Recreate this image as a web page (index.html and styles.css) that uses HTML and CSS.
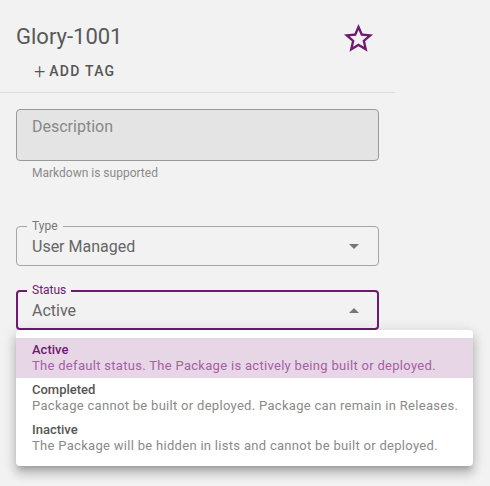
FILE: index.html
```html
<!DOCTYPE html>
<html>
<head>
<meta charset="utf-8">
<link rel="stylesheet" href="styles.css">
</head>
<body>
<div class="panel">
  <header class="head">
    <div class="title-row">
      <h1 class="title">Glory-1001</h1>
      <button class="fav" aria-label="Favorite">
        <svg width="35" height="35" viewBox="0 0 24 24"><path fill="#6e1a6e" d="M22 9.24l-7.19-.62L12 2 9.19 8.63 2 9.24l5.46 4.73L5.82 21 12 17.27 18.18 21l-1.63-7.03L22 9.24zM12 15.4l-3.76 2.27 1-4.28-3.32-2.88 4.38-.38L12 6.1l1.71 4.04 4.38.38-3.32 2.88 1 4.28L12 15.4z"/></svg>
      </button>
    </div>
    <button class="add-tag"><span class="plus">+</span>ADD TAG</button>
  </header>

  <div class="form">
    <div class="field">
      <div class="desc-box">Description</div>
      <div class="helper">Markdown is supported</div>
    </div>

    <div class="select">
      <span class="legend">Type</span>
      <span class="value">User Managed</span>
      <span class="arrow down"></span>
    </div>

    <div class="select focused">
      <span class="legend">Status</span>
      <span class="value">Active</span>
      <span class="arrow up"></span>
    </div>
  </div>

  <ul class="menu">
    <li class="item selected">
      <div class="item-title">Active</div>
      <div class="item-desc">The default status. The Package is actively being built or deployed.</div>
    </li>
    <li class="item">
      <div class="item-title">Completed</div>
      <div class="item-desc">Package cannot be built or deployed. Package can remain in Releases.</div>
    </li>
    <li class="item">
      <div class="item-title">Inactive</div>
      <div class="item-desc">The Package will be hidden in lists and cannot be built or deployed.</div>
    </li>
  </ul>
</div>
</body>
</html>
```
FILE: styles.css
```css
* { box-sizing: border-box; }
html, body {
  margin: 0;
  background: #f2f2f2;
  font-family: Roboto, "Liberation Sans", sans-serif;
}
.panel {
  width: 490px;
  height: 486px;
  position: relative;
}
.head {
  width: 395px;
  border-bottom: 1px solid #dcdcdc;
  padding: 22px 0 11px 16px;
}
.title-row {
  display: flex;
  align-items: center;
  justify-content: space-between;
  height: 30px;
}
.title {
  margin: 0;
  font-size: 22px;
  font-weight: 400;
  color: #585858;
  line-height: 30px;
}
.fav {
  border: 0;
  background: none;
  padding: 0;
  margin-right: 19px;
  display: flex;
  margin-top: 3px;
}
.add-tag {
  margin: 9px 0 0 18px;
  border: 0;
  background: none;
  padding: 0;
  font-family: inherit;
  font-size: 14px;
  font-weight: 500;
  letter-spacing: 1.25px;
  color: #555;
  display: flex;
  align-items: center;
  height: 20px;
}
.plus {
  font-size: 20px;
  font-weight: 300;
  margin-right: 4px;
  letter-spacing: 0;
  line-height: 20px;
}
.form {
  padding: 16px 0 0 16px;
  width: 379px;
}
.desc-box {
  height: 52px;
  border: 1px solid #9a9a9a;
  border-radius: 4px;
  background: #e4e4e4;
  padding: 7px 15px;
  font-size: 16px;
  color: #888;
  line-height: 20px;
}
.helper {
  font-size: 12px;
  color: #8a8a8a;
  padding: 4px 16px 0;
  line-height: 16px;
}
.select {
  position: relative;
  margin-top: 45px;
  height: 40px;
  border: 1px solid #a5a5a5;
  border-radius: 4px;
  display: flex;
  align-items: center;
  padding: 0 15px;
}
.select + .select { margin-top: 24px; }
.select.focused {
  border: 2px solid #6e1a6e;
  padding: 0 14px;
}
.legend {
  position: absolute;
  top: -8px;
  left: 10px;
  padding: 0 5px;
  background: #f2f2f2;
  font-size: 12px;
  line-height: 14px;
  color: #777;
}
.focused .legend { color: #6e1a6e; left: 9px; top: -9px; }
.value {
  font-size: 16px;
  color: #666;
  flex: 1;
}
.arrow {
  width: 0;
  height: 0;
  border-left: 5px solid transparent;
  border-right: 5px solid transparent;
  margin-right: 4px;
}
.arrow.down { border-top: 5px solid #777; }
.arrow.up { border-bottom: 5px solid #777; }
.menu {
  position: absolute;
  left: 16px;
  top: 330px;
  width: 457px;
  margin: 0;
  padding: 8px 0;
  list-style: none;
  background: #fff;
  border-radius: 4px;
  box-shadow: 0 5px 5px -3px rgba(0,0,0,.2), 0 8px 10px 1px rgba(0,0,0,.14), 0 3px 14px 2px rgba(0,0,0,.12);
}
.item {
  height: 40px;
  padding: 4px 0 0 16px;
  font-size: 13px;
  line-height: 16px;
  white-space: nowrap;
}
.item-title {
  font-weight: 500;
  color: #555;
}
.item-desc {
  color: #8a8a8a;
  letter-spacing: 0.3px;
}
.item.selected { background: #e7d7e6; }
.selected .item-title { color: #6e1a6e; }
.selected .item-desc { color: #a460a4; }
```
